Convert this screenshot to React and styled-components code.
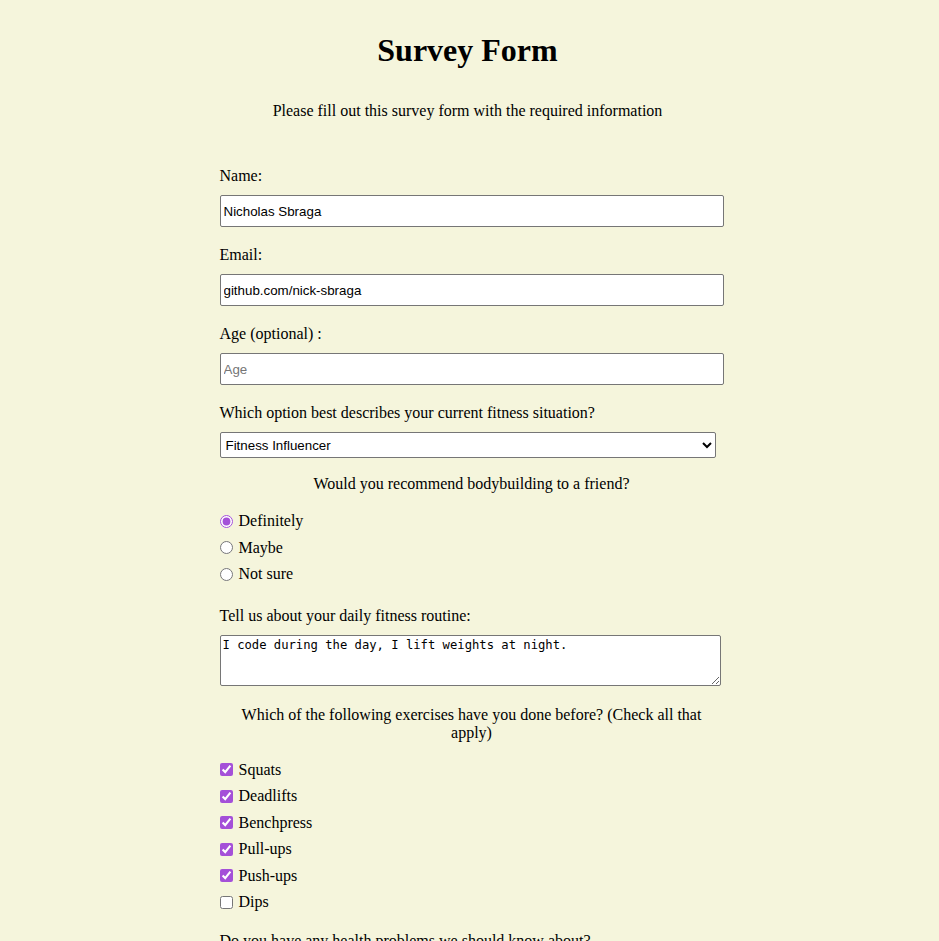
import React from 'react'
import styled, { createGlobalStyle } from 'styled-components';

const GlobalStyle = createGlobalStyle`
  html, body {
    margin: 0;
    background-color: #f5f5dc;
  }
  body {
    font-family: "Liberation Serif", "Times New Roman", serif;
    font-size: 16px;
    color: #000;
  }
`;

const Page = styled.div`
  display: flex;
  flex-direction: column;
  align-items: center;
  padding-right: 4px;
`;

const Title = styled.h1`
  margin: 32px 0 0;
  font-size: 32px;
  line-height: 37px;
  font-weight: bold;
  text-align: center;
`;

const Description = styled.p`
  margin: 33px 0 0;
  line-height: 18px;
  text-align: center;
`;

const Form = styled.form`
  width: 504px;
  margin: 47px 0 0 8px;
  display: flex;
  flex-direction: column;
`;

const Label = styled.label`
  display: block;
  line-height: 18px;
  margin: ${p => (p.$first ? '0' : '19px')} 0 10px;
`;

const TextInput = styled.input`
  box-sizing: border-box;
  width: 100%;
  height: 32px;
  padding: 0 3px;
  border: 1px solid #767676;
  border-radius: 2px;
  background: #fff;
  font-family: "Liberation Sans", Arial, sans-serif;
  font-size: 13.33px;
  color: #000;

  &::placeholder {
    color: #757575;
  }
`;

const Select = styled.select`
  box-sizing: border-box;
  width: 496px;
  height: 26px;
  padding: 0 1px;
  border: 1px solid #767676;
  border-radius: 2px;
  background: #fff;
  font-family: "Liberation Sans", Arial, sans-serif;
  font-size: 13.33px;
  color: #000;
`;

const Question = styled.p`
  margin: ${p => p.$top || '17px'} 0 15px;
  line-height: 18px;
  text-align: center;
`;

const Option = styled.label`
  display: flex;
  align-items: center;
  height: 26.5px;
  line-height: 18px;
`;

const Mark = styled.input`
  width: 13px;
  height: 13px;
  margin: 0 6px 0 0;
  accent-color: #a450d8;
`;

const TextArea = styled.textarea`
  box-sizing: border-box;
  width: 501px;
  height: 51px;
  padding: 2px;
  border: 1px solid #767676;
  border-radius: 2px;
  background: #fff;
  font-family: "DejaVu Sans Mono", "Liberation Mono", monospace;
  font-size: 12.2px;
  color: #000;
`;

const BottomLabel = styled.label`
  display: block;
  line-height: 18px;
  margin: 16px 0 10px;
`;

const radios = ['Definitely', 'Maybe', 'Not sure'];
const exercises = [
  { name: 'Squats', checked: true },
  { name: 'Deadlifts', checked: true },
  { name: 'Benchpress', checked: true },
  { name: 'Pull-ups', checked: true },
  { name: 'Push-ups', checked: true },
  { name: 'Dips', checked: false },
];

function App() {
  return (
    <>
      <GlobalStyle />
      <Page>
        <Title>Survey Form</Title>
        <Description>Please fill out this survey form with the required information</Description>
        <Form onSubmit={e => e.preventDefault()}>
          <Label $first htmlFor="name">Name:</Label>
          <TextInput id="name" type="text" defaultValue="Nicholas Sbraga" />

          <Label htmlFor="email">Email:</Label>
          <TextInput id="email" type="text" defaultValue="github.com/nick-sbraga" />

          <Label htmlFor="age">Age (optional) :</Label>
          <TextInput id="age" type="number" placeholder="Age" />

          <Label htmlFor="situation">Which option best describes your current fitness situation?</Label>
          <Select id="situation" defaultValue="influencer">
            <option value="beginner">Beginner</option>
            <option value="intermediate">Intermediate</option>
            <option value="influencer">Fitness Influencer</option>
          </Select>

          <Question>Would you recommend bodybuilding to a friend?</Question>
          {radios.map((r, i) => (
            <Option key={r}>
              <Mark type="radio" name="recommend" defaultChecked={i === 0} />
              {r}
            </Option>
          ))}

          <Label htmlFor="routine">Tell us about your daily fitness routine:</Label>
          <TextArea id="routine" defaultValue="I code during the day, I lift weights at night." />

          <Question $top="20px">Which of the following exercises have you done before? (Check all that apply)</Question>
          {exercises.map(ex => (
            <Option key={ex.name}>
              <Mark type="checkbox" defaultChecked={ex.checked} />
              {ex.name}
            </Option>
          ))}

          <BottomLabel htmlFor="health">Do you have any health problems we should know about?</BottomLabel>
        </Form>
      </Page>
    </>
  )
}

export default App;
